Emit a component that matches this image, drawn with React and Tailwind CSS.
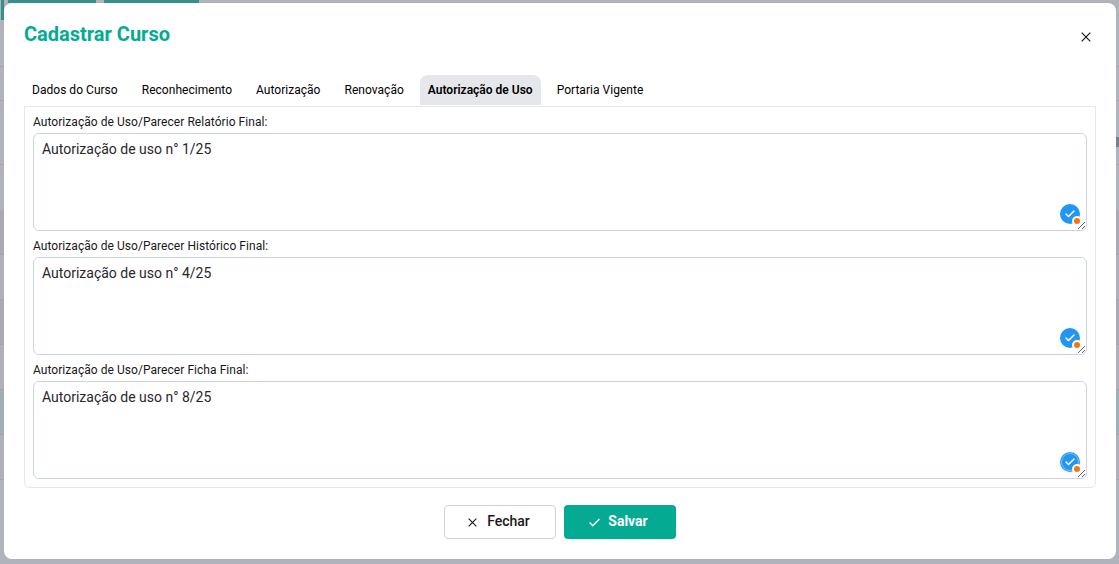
import React from 'react';
import { Check } from 'lucide-react';

const tabs = ['Dados do Curso', 'Reconhecimento', 'Autorização', 'Renovação', 'Autorização de Uso', 'Portaria Vigente'];

const fields = [
  { label: 'Autorização de Uso/Parecer Relatório Final:', value: 'Autorização de uso n° 1/25' },
  { label: 'Autorização de Uso/Parecer Histórico Final:', value: 'Autorização de uso n° 4/25' },
  { label: 'Autorização de Uso/Parecer Ficha Final:', value: 'Autorização de uso n° 8/25', ring: true },
];

// table rows of the page behind the overlay, only their edges show
const rows = [
  { h: 'h-[45px]', bg: 'bg-[#a9abb1]' },
  { h: 'h-[45px]', bg: 'bg-[#afb1b7]' },
  { h: 'h-[45px]', bg: 'bg-[#a9abb1]' },
  { h: 'h-[45px]', bg: 'bg-[#afb1b7]' },
  { h: 'h-[45px]', bg: 'bg-[#a2aeb3]' },
  { h: 'h-[45px]', bg: 'bg-[#afb1b7]' },
];

const CloseIcon = ({ className }) => (
  <svg viewBox="0 0 10 10" className={className} fill="none" stroke="currentColor" strokeWidth="1.2">
    <path d="M0.7 0.7 9.3 9.3M9.3 0.7 0.7 9.3" />
  </svg>
);

const Field = ({ label, value, ring }) => {
  return (
    <div className="mt-[6px] flex flex-col">
      <label className="h-[20px] pt-[1px] text-[12px] leading-[16px] font-[450] tracking-[0.05px] text-[#18181b]">{label}</label>
      <div className="relative h-[98px]">
        <textarea
          defaultValue={value}
          className="block h-[98px] w-full resize-y rounded-[6px] border border-[#cbd5e1] bg-white px-[8px] py-[5px] text-[14px] leading-[20px] text-[#27272a] outline-none"
        />
        <div className="absolute right-[7px] bottom-[7px] flex h-[20px] w-[20px] items-center justify-center rounded-full bg-[#2196f3]">
          {ring && <span className="absolute inset-[1px] rounded-full border border-[#7cc0f7]" />}
          <Check className="relative h-[12px] w-[12px] text-white" strokeWidth={3} />
          <span className="absolute -right-[2px] -bottom-[2px] h-[10px] w-[10px] rounded-full border-2 border-white bg-[#f97316]" />
        </div>
      </div>
    </div>
  );
};

const App = () => {
  return (
    <div className="relative h-[564px] w-[1119px] overflow-hidden bg-[#b1b3ba] font-['Roboto',sans-serif]">
      {/* page behind the overlay */}
      <div className="flex gap-[8px] pl-[8px]">
        <div className="h-[3px] w-[88px] bg-[#379088]" />
        <div className="h-[3px] w-[95px] bg-[#379088]" />
      </div>
      <div className="mt-[63px] h-px bg-[#a3a5ab]" />
      <div className="mt-[33px] h-px bg-[#a3a5ab]" />
      <div className="mt-[63px] h-px bg-[#a3a5ab]" />
      <div className="mt-[45px] flex flex-col">
        {rows.map((row, i) => (
          <div key={i} className={`${row.h} ${row.bg} border-b border-[#a3a5ab]`} />
        ))}
      </div>

      {/* overlay: left edge of the page's side bar */}
      <div className="absolute top-0 left-[1px] h-[20px] w-[3px] bg-[#379088]" />
      <div className="absolute top-[137px] right-0 h-[10px] w-[3px] bg-[#76808c]" />

      <div className="absolute inset-0 pt-[3px] pr-[3px] pb-[5px] pl-[4px]">
        <div className="flex h-full flex-col rounded-[8px] bg-white px-[20px]">
          <div className="flex h-[71px] items-start justify-between">
            <h1 className="mt-[17px] text-[20px] leading-[28px] font-bold text-[#04ab92]">Cadastrar Curso</h1>
            <CloseIcon className="mt-[29px] mr-[5px] h-[10px] w-[10px] text-[#18181b]" />
          </div>

          <div className="flex h-[31px] items-end gap-[8px]">
            {tabs.map((tab) => (
              <div
                key={tab}
                className={`flex h-[30px] items-center rounded-t-[8px] text-[12px] text-black ${
                  tab === 'Autorização de Uso'
                    ? 'bg-[#e5e7eb] px-[8px] font-semibold'
                    : 'px-[8px] font-[450] tracking-[0.03px]'
                }`}
              >
                {tab}
              </div>
            ))}
          </div>

          <div className="mt-px h-[382px] rounded-b-[6px] border border-[#e5e7eb] px-[8px]">
            {fields.map((field) => (
              <Field key={field.label} {...field} />
            ))}
          </div>

          <div className="mt-[17px] flex justify-center gap-[8px]">
            <button className="flex h-[34px] w-[112px] items-center justify-center gap-[10px] rounded-[4px] border border-[#cbd5e1] bg-white pr-[2px] text-[14px] font-medium text-[#18181b]">
              <CloseIcon className="h-[9px] w-[9px]" />
              <span className="mb-[2px]">Fechar</span>
            </button>
            <button className="flex h-[34px] w-[112px] items-center justify-center gap-[8px] rounded-[4px] bg-[#04ab92] pr-[3px] text-[14px] font-bold text-white">
              <svg viewBox="0 0 11 9" className="h-[9px] w-[11px]" fill="none" stroke="currentColor" strokeWidth="1.4">
                <path d="M0.6 4.6 3.8 7.8 10.4 1" />
              </svg>
              <span className="mb-[2px]">Salvar</span>
            </button>
          </div>
        </div>
      </div>
    </div>
  );
};

export default App;
